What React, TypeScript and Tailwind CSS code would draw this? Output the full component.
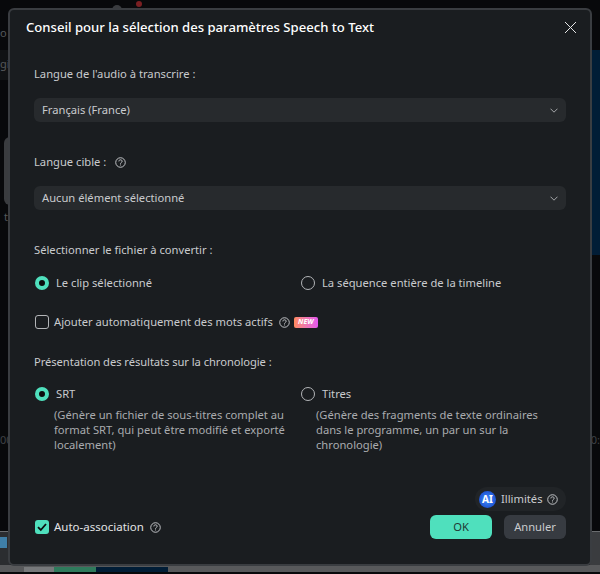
import React from 'react';

const font = { fontFamily: '"Noto Sans", sans-serif' };

const Help = ({ className = '' }: { className?: string }) => (
    <svg viewBox="0 0 12 12" className={`w-[11px] h-[11px] shrink-0 ${className}`} fill="none" stroke="#cfd1d4" strokeWidth="1">
        <circle cx="6" cy="6" r="5.2" />
        <path d="M4.2 4.8c0-1.1.8-1.7 1.8-1.7s1.8.6 1.8 1.6c0 1.2-1.7 1.3-1.8 2.6" />
        <path d="M6 8.2v1" />
    </svg>
);

const Chevron = () => (
    <svg viewBox="0 0 8 5" className="w-2 h-[5px]" fill="none" stroke="#a5a7aa" strokeWidth="1">
        <path d="M.5.7 4 4.2 7.5.7" />
    </svg>
);

const Select = ({ value }: { value: string }) => (
    <div className="h-6 rounded-md bg-[#272a2d] flex items-center justify-between pl-2 pr-2 text-[#c9cbce]">
        <span>{value}</span>
        <Chevron />
    </div>
);

const Radio = ({ checked }: { checked?: boolean }) =>
    checked ? (
        <span className="ml-[1px] w-[14px] h-[14px] rounded-full border-[4px] border-[#4fe0bd] bg-[#0c0d0e] shrink-0" />
    ) : (
        <span className="ml-[1px] w-[14px] h-[14px] rounded-full border border-[#b3b5b8] shrink-0" />
    );

export default function App() {
    return (
        <div className="relative w-[600px] h-[574px] overflow-hidden bg-[#08090b] pl-2 pt-2 text-[11.2px]" style={font}>
            {/* app behind the dialog, only its edges show */}
            <div className="absolute right-0 top-[50px] w-[10px] h-[205px] bg-[#011d36]" />
            <div className="absolute left-0 top-[50px] w-[8px] h-[30px] bg-[#101214]" />
            <div className="absolute left-[4px] top-[137px] w-[6px] h-[68px] rounded-l-md bg-[#3a3c3f]" />
            <div className="absolute left-0 top-[25px] text-[#55585b] text-[11px]">o</div>
            <div className="absolute left-0 top-[56px] text-[#55585b] text-[11px]">gi</div>
            <div className="absolute left-[4px] top-[209px] text-[#55585b] text-[11px]">t</div>
            <div className="absolute left-0 top-[432px] text-[#3f4246] text-[11px]">00</div>
            <div className="absolute right-0 top-[432px] text-[#3f4246] text-[11px]">0:</div>
            <div className="absolute left-[136px] top-[1px] w-[6px] h-[6px] rounded-full bg-[#7a1f22]" />
            <div className="absolute left-[112px] top-[5px] w-[10px] h-[6px] rounded-t-full bg-[#3a3c3f]" />
            <div className="absolute left-0 top-[531px] w-[10px] h-[36px] border-t border-[#6a6c6f] bg-[#2b2d30]" />
            <div className="absolute left-0 top-[537px] w-[7px] h-[11px] bg-[#3f7fa8]" />
            <div className="absolute right-0 top-[531px] w-[10px] h-[36px] border-t border-[#6a6c6f] bg-[#3a3c3f]" />
            <div className="absolute left-0 top-[565px] w-full h-[7px] bg-[#58595b] flex items-end">
                <span className="ml-[24px] w-[30px] h-[5px] bg-[#77797b]" />
                <span className="w-[42px] h-[5px] bg-[#2f7a5c]" />
                <span className="w-[72px] h-[5px] bg-[#011d36]" />
            </div>

            <div className="relative w-[584px] h-[558px] rounded-[6px] border-2 border-[#3a3d41] bg-[#1a1d20] flex flex-col">
                <div className="flex items-center justify-between pl-4 pr-[13px] h-[34px] pt-[1px]">
                    <h1 className="text-[13.1px] font-medium text-white">Conseil pour la sélection des paramètres Speech to Text</h1>
                    <svg viewBox="0 0 13 13" className="w-[13px] h-[13px]" fill="none" stroke="#e4e5e6" strokeWidth="1">
                        <path d="M1 1l11 11M12 1 1 12" />
                    </svg>
                </div>

                <div className="px-6 text-[#c9cbce] flex-1 flex flex-col">
                    <p className="mt-[22px] leading-4">Langue de l'audio à transcrire :</p>
                    <div className="mt-4">
                        <Select value="Français (France)" />
                    </div>

                    <div className="mt-8 flex items-center gap-[9px] leading-4">
                        <span>Langue cible :</span>
                        <Help />
                    </div>
                    <div className="mt-4">
                        <Select value="Aucun élément sélectionné" />
                    </div>

                    <p className="mt-8 leading-4">Sélectionner le fichier à convertir :</p>
                    <div className="mt-[17px] grid grid-cols-[266px_1fr] h-4">
                        <div className="flex items-center gap-[7px]">
                            <Radio checked />
                            <span>Le clip sélectionné</span>
                        </div>
                        <div className="flex items-center gap-[7px]">
                            <Radio />
                            <span>La séquence entière de la timeline</span>
                        </div>
                    </div>

                    <div className="mt-[23px] flex items-center h-4">
                        <span className="ml-[1px] w-[14px] h-[14px] rounded-[3px] border border-[#b3b5b8] shrink-0" />
                        <span className="ml-[5px]">Ajouter automatiquement des mots actifs</span>
                        <Help className="ml-[6px]" />
                        <span className="ml-1 w-6 h-[11px] rounded-[2px] bg-gradient-to-r from-[#ff8a5c] to-[#e455f0] text-white text-[7px] font-bold italic flex items-center justify-center">NEW</span>
                    </div>

                    <p className="mt-6 leading-4 tracking-[-0.06px]">Présentation des résultats sur la chronologie :</p>

                    <div className="mt-4 grid grid-cols-[266px_1fr]">
                        <div>
                            <div className="flex items-center gap-[7px] h-4">
                                <Radio checked />
                                <span>SRT</span>
                            </div>
                            <p className="ml-5 mt-[5px] w-[236px] text-[#a9abae] leading-[15px]">(Génère un fichier de sous-titres complet au format SRT, qui peut être modifié et exporté localement)</p>
                        </div>
                        <div>
                            <div className="flex items-center gap-[7px] h-4">
                                <Radio />
                                <span>Titres</span>
                            </div>
                            <p className="ml-4 mt-[5px] w-[236px] text-[#a9abae] leading-[15px]">(Génère des fragments de texte ordinaires dans le programme, un par un sur la chronologie)</p>
                        </div>
                    </div>
                </div>

                <div className="flex justify-end pr-6">
                    <div className="h-6 w-[91px] rounded-full bg-[#212427] flex items-center pl-1 gap-[5px] text-[#c9cbce]">
                        <span className="w-[17px] h-[17px] rounded-full bg-[radial-gradient(circle,#3f8cff,#123fc0)] text-white text-[10px] font-bold flex items-center justify-center">AI</span>
                        <span>Illimités</span>
                        <Help className="-ml-[1px] w-3 h-3" />
                    </div>
                </div>
                <div className="flex items-center justify-between pl-6 pr-6 mt-1 mb-[25px]">
                    <div className="flex items-center text-[#e2e3e5] text-[11.5px]">
                        <span className="ml-[1px] w-[14px] h-[14px] rounded-[3px] bg-[#4fe0bd] flex items-center justify-center shrink-0">
                            <svg viewBox="0 0 10 10" className="w-[10px] h-[10px]" fill="none" stroke="#0c0d0e" strokeWidth="1.8">
                                <path d="M1 5.2 3.8 8 9 2" />
                            </svg>
                        </span>
                        <span className="ml-[5px]">Auto-association</span>
                        <Help className="ml-[6px]" />
                    </div>
                    <div className="flex gap-3">
                        <button className="w-[62px] h-6 rounded-md bg-[#4fe0bd] text-[#1f3a36]">OK</button>
                        <button className="w-[62px] h-6 rounded-md bg-[#373b41] text-[#c9cbce]">Annuler</button>
                    </div>
                </div>
            </div>
        </div>
    );
}
